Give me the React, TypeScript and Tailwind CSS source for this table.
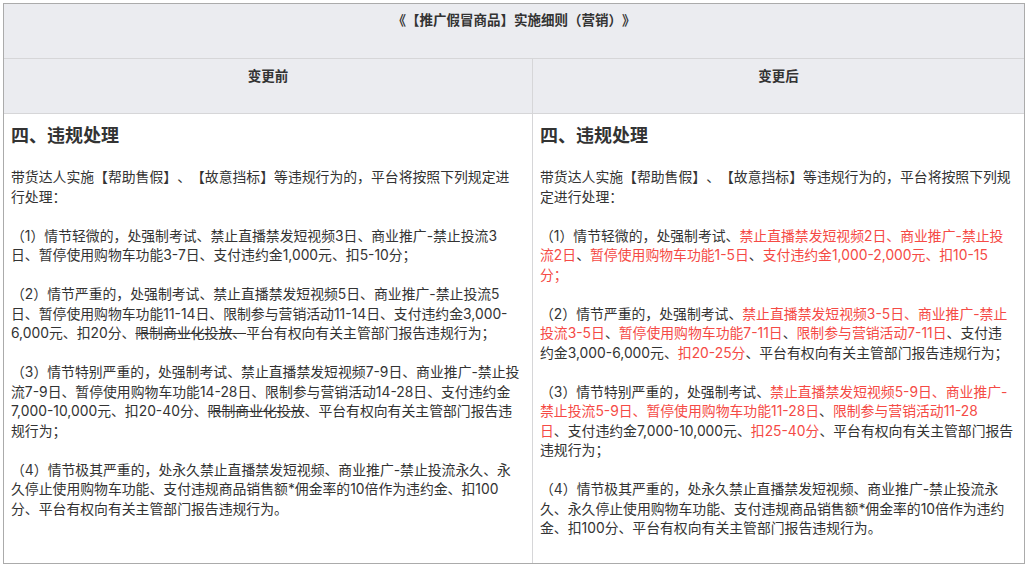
import React from "react";

type Seg = string | { t: string; k: "r" | "s" };
const r = (t: string): Seg => ({ t, k: "r" });
const s = (t: string): Seg => ({ t, k: "s" });

const leftParas: Seg[][][] = [
  [["带货达人实施【帮助售假】、【故意挡标】等违规行为的，平台将按照下列规定进"], ["行处理："]],
  [
    ["（1）情节轻微的，处强制考试、禁止直播禁发短视频3日、商业推广-禁止投流3"],
    ["日、暂停使用购物车功能3-7日、支付违约金1,000元、扣5-10分；"],
  ],
  [
    ["（2）情节严重的，处强制考试、禁止直播禁发短视频5日、商业推广-禁止投流5"],
    ["日、暂停使用购物车功能11-14日、限制参与营销活动11-14日、支付违约金3,000-"],
    ["6,000元、扣20分、", s("限制商业化投放、"), "平台有权向有关主管部门报告违规行为；"],
  ],
  [
    ["（3）情节特别严重的，处强制考试、禁止直播禁发短视频7-9日、商业推广-禁止投"],
    ["流7-9日、暂停使用购物车功能14-28日、限制参与营销活动14-28日、支付违约金"],
    ["7,000-10,000元、扣20-40分、", s("限制商业化投放"), "、平台有权向有关主管部门报告违"],
    ["规行为；"],
  ],
  [
    ["（4）情节极其严重的，处永久禁止直播禁发短视频、商业推广-禁止投流永久、永"],
    ["久停止使用购物车功能、支付违规商品销售额*佣金率的10倍作为违约金、扣100"],
    ["分、平台有权向有关主管部门报告违规行为。"],
  ],
];

const rightParas: Seg[][][] = [
  [["带货达人实施【帮助售假】、【故意挡标】等违规行为的，平台将按照下列规"], ["定进行处理："]],
  [
    ["（1）情节轻微的，处强制考试、", r("禁止直播禁发短视频2日、商业推广-禁止投")],
    [r("流2日"), "、", r("暂停使用购物车功能1-5日"), "、", r("支付违约金1,000-2,000元、扣10-15")],
    [r("分；")],
  ],
  [
    ["（2）情节严重的，处强制考试、", r("禁止直播禁发短视频3-5日、商业推广-禁止")],
    [r("投流3-5日"), "、", r("暂停使用购物车功能7-11日"), "、", r("限制参与营销活动7-11日"), "、支付违"],
    ["约金3,000-6,000元、", r("扣20-25分"), "、平台有权向有关主管部门报告违规行为；"],
  ],
  [
    ["（3）情节特别严重的，处强制考试、", r("禁止直播禁发短视频5-9日、商业推广-")],
    [r("禁止投流5-9日、暂停使用购物车功能11-28日"), "、", r("限制参与营销活动11-28")],
    [r("日"), "、支付违约金7,000-10,000元、", r("扣25-40分"), "、平台有权向有关主管部门报告"],
    ["违规行为；"],
  ],
  [
    ["（4）情节极其严重的，处永久禁止直播禁发短视频、商业推广-禁止投流永"],
    ["久、永久停止使用购物车功能、支付违规商品销售额*佣金率的10倍作为违约"],
    ["金、扣100分、平台有权向有关主管部门报告违规行为。"],
  ],
];

function Line({ segs }: { segs: Seg[] }) {
  return (
    <div className="whitespace-nowrap h-[19.5px] leading-[19.5px]">
      {segs.map((seg, i) =>
        typeof seg === "string" ? (
          <span key={i}>{seg}</span>
        ) : seg.k === "r" ? (
          <span key={i} className="text-[#f54a45]">
            {seg.t}
          </span>
        ) : (
          <span key={i} className="line-through">
            {seg.t}
          </span>
        )
      )}
    </div>
  );
}

function Body({ paras }: { paras: Seg[][][] }) {
  return (
    <div className="pt-[9px] pl-[7px]">
      <div className="text-[18px] leading-[26px] font-bold text-[#333]">四、违规处理</div>
      <div className="mt-[19px] flex flex-col gap-[19.5px] text-[13.85px] text-[#333]">
        {paras.map((p, i) => (
          <div key={i}>
            {p.map((l, j) => (
              <Line key={j} segs={l} />
            ))}
          </div>
        ))}
      </div>
    </div>
  );
}

export default function App() {
  return (
    <div
      className="w-[1028px] h-[567px] bg-white p-[3px] [text-spacing-trim:space-all]"
      style={{ fontFamily: 'Inter, "Noto Sans CJK SC", sans-serif' }}
    >
      <div className="w-[1022px] h-[561px] border border-[#ababab] flex flex-col">
        <div className="h-[55px] bg-[#ebecf0] border-b border-[#d6d6d8] pt-[6px] text-center text-[13.5px] leading-[20px] font-bold text-[#333]">
          《【推广假冒商品】实施细则（营销）》
        </div>
        <div className="h-[55px] bg-[#ebecf0] border-b border-[#d6d6d8] flex text-[13.5px] leading-[20px] font-bold text-[#333]">
          <div className="w-[529px] border-r border-[#d6d6d8] pt-[7px] text-center">变更前</div>
          <div className="flex-1 pt-[7px] text-center">变更后</div>
        </div>
        <div className="flex-1 flex bg-white">
          <div className="w-[529px] border-r border-[#d6d6d8]">
            <Body paras={leftParas} />
          </div>
          <div className="flex-1">
            <Body paras={rightParas} />
          </div>
        </div>
      </div>
    </div>
  );
}
